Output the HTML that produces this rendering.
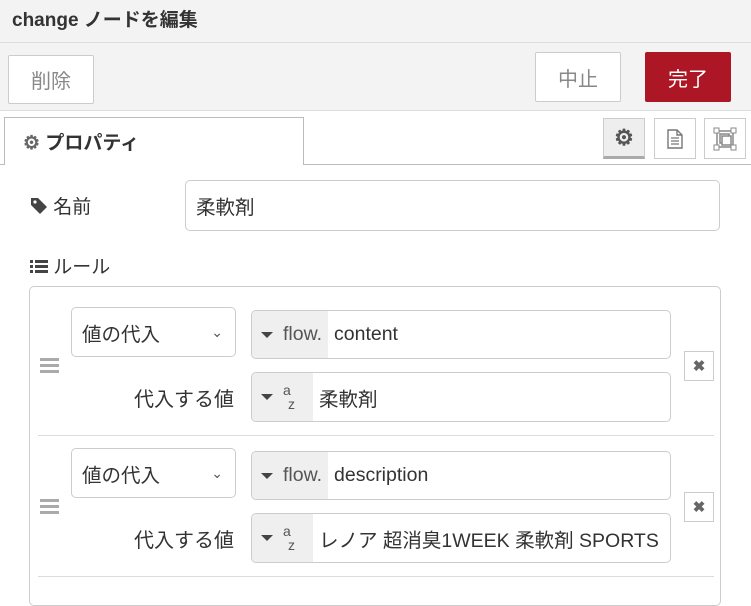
<!DOCTYPE html>
<html><head><meta charset="utf-8"><style>
*{box-sizing:border-box;margin:0;padding:0}
body{width:751px;height:594px;overflow:hidden;background:#fff;font-family:"Liberation Sans","Noto Sans CJK JP",sans-serif;color:#333;position:relative}
.a{position:absolute}
.btn{position:absolute;border:1px solid #ccc;background:#fff;color:#888;font-size:20px;display:flex;align-items:center;justify-content:center;border-radius:2px}
.inp{position:absolute;border:1px solid #ccc;border-radius:5px;background:#fff;font-size:19.5px;display:flex;align-items:center;overflow:hidden;white-space:nowrap}
.pre{background:#efefef;height:100%;display:flex;align-items:center;padding-left:9px;color:#555;flex:none}
.tri{width:0;height:0;border-left:6px solid transparent;border-right:6px solid transparent;border-top:6px solid #444;margin-right:10px}
.ib{position:absolute;width:42px;height:41px;border:1px solid #ccc;background:#fff;display:flex;align-items:center;justify-content:center}
.h{position:absolute;left:40px;width:19px;height:3px;background:#aaa;box-shadow:0 6px 0 #aaa,0 12px 0 #aaa}
.x{position:absolute;left:684px;width:30px;height:30px;border:1px solid #ccc;background:#fff;color:#666;font-size:15px;display:flex;align-items:center;justify-content:center;font-weight:bold}
</style></head><body>
<div class="a" style="left:0;top:0;width:751px;height:111px;background:#f3f3f3;border-bottom:1px solid #ddd"></div>
<div class="a" style="left:0;top:42px;width:751px;height:1px;background:#ddd"></div>
<div class="a" style="left:12px;top:5px;font-size:19px;font-weight:bold;color:#333">change ノードを編集</div>
<div class="btn" style="left:8px;top:55px;width:86px;height:49px">削除</div>
<div class="btn" style="left:535px;top:52px;width:86px;height:50px">中止</div>
<div class="btn" style="left:645px;top:52px;width:86px;height:50px;background:#ad1625;border-color:#ad1625;color:#fff">完了</div>
<div class="a" style="left:0;top:164px;width:751px;height:1px;background:#bbb"></div>
<div class="a" style="left:4px;top:117px;width:300px;height:48px;border:1px solid #bbb;border-bottom:none;background:#fff;font-size:19px;font-weight:bold;padding:10px 0 0 18px"><span style="color:#666">⚙</span> プロパティ</div>
<div class="ib" style="left:603px;top:118px;background:#eee;border-bottom:3px solid #aaa;color:#555;font-size:22px;font-weight:bold">⚙</div>
<div class="ib" style="left:654px;top:118px"><svg width="16" height="20" viewBox="0 0 16 20"><path d="M1 1h9l5 5v13H1z M10 1v5h5" fill="none" stroke="#777" stroke-width="1.4"/><path d="M4 9h8M4 12h8M4 15h8" stroke="#777" stroke-width="1.3"/></svg></div>
<div class="ib" style="left:704px;top:118px"><svg width="24" height="24" viewBox="0 0 24 24"><rect x="4" y="4" width="16" height="16" fill="none" stroke="#888" stroke-width="1.5"/><rect x="7" y="7" width="9" height="9" fill="none" stroke="#888" stroke-width="1.5"/><rect x="9" y="9" width="9" height="9" fill="#fff" stroke="#888" stroke-width="1.5"/><rect x="1" y="1" width="5" height="5" fill="#fff" stroke="#888"/><rect x="18" y="1" width="5" height="5" fill="#fff" stroke="#888"/><rect x="1" y="18" width="5" height="5" fill="#fff" stroke="#888"/><rect x="18" y="18" width="5" height="5" fill="#fff" stroke="#888"/></svg></div>
<div class="a" style="left:30px;top:192px;font-size:19px"><svg width="18" height="18" viewBox="0 0 18 18" style="vertical-align:-2px"><path d="M1 1h7l9 9-7 7-9-9z" fill="#444"/><circle cx="5" cy="5" r="1.6" fill="#fff"/></svg> 名前</div>
<div class="inp" style="left:185px;top:180px;width:535px;height:51px;padding-left:10px">柔軟剤</div>
<div class="a" style="left:30px;top:252px;font-size:19px"><svg width="18" height="16" viewBox="0 0 18 16" style="vertical-align:-1px"><path d="M0 2h3v3H0zM5 2h13v3H5zM0 7h3v3H0zM5 7h13v3H5zM0 12h3v3H0zM5 12h13v3H5z" fill="#444"/></svg> ルール</div>
<div class="a" style="left:29px;top:286px;width:692px;height:320px;border:1px solid #ccc;border-radius:5px"></div>

<div class="h" style="top:358px"></div>
<div class="inp" style="left:71px;top:307px;width:165px;height:50px;padding-left:10px">値の代入<span style="position:absolute;right:12px;font-size:14px;color:#555">⌄</span></div>
<div class="inp" style="left:251px;top:310px;width:420px;height:49px"><div class="pre" style="width:76px"><span class="tri"></span>flow.</div><span style="padding-left:6px">content</span></div>
<div class="a" style="left:134px;top:383px;font-size:20px">代入する値</div>
<div class="inp" style="left:251px;top:372px;width:420px;height:50px"><div class="pre" style="width:61px"><span class="tri"></span><span style="font-size:14px;line-height:1">a<br><span style="margin-left:5px">z</span></span></div><span style="padding-left:6px">柔軟剤</span></div>
<div class="x" style="top:351px">✖</div>
<div class="a" style="left:38px;top:435px;width:676px;height:1px;background:#ddd"></div>

<div class="h" style="top:499px"></div>
<div class="inp" style="left:71px;top:448px;width:165px;height:50px;padding-left:10px">値の代入<span style="position:absolute;right:12px;font-size:14px;color:#555">⌄</span></div>
<div class="inp" style="left:251px;top:451px;width:420px;height:49px"><div class="pre" style="width:76px"><span class="tri"></span>flow.</div><span style="padding-left:6px">description</span></div>
<div class="a" style="left:134px;top:524px;font-size:20px">代入する値</div>
<div class="inp" style="left:251px;top:513px;width:420px;height:50px"><div class="pre" style="width:61px"><span class="tri"></span><span style="font-size:14px;line-height:1">a<br><span style="margin-left:5px">z</span></span></div><span style="padding-left:6px">レノア 超消臭1WEEK 柔軟剤 SPORTS</span></div>
<div class="x" style="top:492px">✖</div>
<div class="a" style="left:38px;top:576px;width:676px;height:1px;background:#ddd"></div>
</body></html>
